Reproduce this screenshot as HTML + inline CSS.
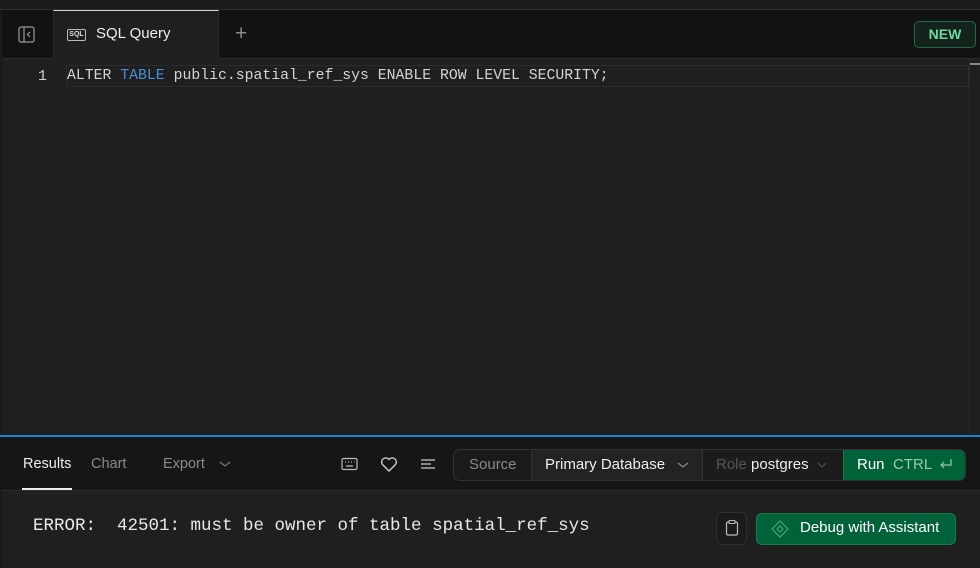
<!DOCTYPE html>
<html><head><style>
*{box-sizing:border-box;margin:0;padding:0}
body{width:980px;height:568px;overflow:hidden;background:#1f1f1f;font-family:"Liberation Sans",sans-serif;position:relative}
.abs{position:absolute}
.mono{font-family:"Liberation Mono","DejaVu Sans Mono",monospace}
</style></head><body>
<div class="abs" style="left:0;top:0;width:980px;height:10px;background:#1c1c1c;border-bottom:1px solid #2e2e2e"></div>
<div class="abs" style="left:0;top:10px;width:980px;height:49px;background:#121212;border-bottom:1px solid #2a2a2a"></div>
<div class="abs" style="left:0;top:10px;width:2px;height:558px;background:#1a1a1a"></div>
<svg class="abs" style="left:18px;top:26px" width="18" height="18" viewBox="0 0 18 18"><rect x="1" y="1" width="15" height="15" rx="2" fill="none" stroke="#9a9a9a" stroke-width="1.2"/><line x1="6" y1="1" x2="6" y2="16" stroke="#9a9a9a" stroke-width="1.2"/><path d="M12 6l-2.5 2.5L12 11" fill="none" stroke="#9a9a9a" stroke-width="1.2"/></svg>
<div class="abs" style="left:53px;top:10px;width:166px;height:49px;background:#1f1f1f;border-top:1px solid #cfcfcf;border-right:1px solid #2a2a2a;border-left:1px solid #2a2a2a"></div>
<div class="abs" style="left:67px;top:29px;width:19px;height:12px;border:1px solid #bbb;border-radius:2px;font-size:7px;color:#ddd;text-align:center;line-height:10px;font-weight:bold">SQL</div>
<div class="abs" style="left:96px;top:25px;font-size:15px;color:#eee">SQL Query</div>
<div class="abs" style="left:235px;top:22px;font-size:21px;color:#8a8a8a;font-weight:300">+</div>
<div class="abs" style="left:914px;top:21px;width:62px;height:27px;border:1px solid #1f6b45;background:#13231b;border-radius:5px;color:#6fd8a0;font-size:14px;font-weight:bold;text-align:center;line-height:25px">NEW</div>
<div class="abs" style="left:66px;top:65px;width:903px;height:22px;border:1px solid #2c2c2c"></div>
<div class="abs" style="left:969px;top:59px;width:1px;height:377px;background:#2a2a2a"></div>
<div class="abs" style="left:970px;top:63px;width:10px;height:2px;background:#888"></div>
<div class="abs mono" style="left:38px;top:68px;font-size:15px;color:#cfcfcf">1</div>
<div class="abs mono" style="left:67px;top:68px;font-size:14.8px;color:#d4d4d4;white-space:pre">ALTER <span style="color:#4a8fd6">TABLE</span> public.spatial_ref_sys ENABLE ROW LEVEL SECURITY;</div>
<div class="abs" style="left:0;top:435px;width:980px;height:2px;background:#1e7fd6"></div>
<div class="abs" style="left:0;top:437px;width:980px;height:54px;background:#161616;border-bottom:1px solid #2c2c2c"></div>
<div class="abs" style="left:23px;top:456px;font-size:14.5px;color:#eee">Results</div>
<div class="abs" style="left:22px;top:488px;width:50px;height:2px;background:#eee"></div>
<div class="abs" style="left:91px;top:456px;font-size:14.5px;color:#8a8a8a">Chart</div>
<div class="abs" style="left:163px;top:456px;font-size:14.5px;color:#8a8a8a">Export</div>
<svg class="abs" style="left:219px;top:460px" width="12" height="8"><path d="M1 2l5 4 5-4" fill="none" stroke="#777" stroke-width="1.2"/></svg>
<svg class="abs" style="left:341px;top:457px" width="18" height="14"><rect x="1" y="1.5" width="15" height="11" rx="1.5" fill="none" stroke="#bbb" stroke-width="1.2"/><path d="M4 5h1M7 5h1M10 5h1M13 5h0.5M5 9h7" stroke="#bbb" stroke-width="1.2"/></svg>
<svg class="abs" style="left:380px;top:456px" width="18" height="16"><path d="M9 15L2.5 8.5A3.8 3.8 0 0 1 9 3.5a3.8 3.8 0 0 1 6.5 5z" fill="none" stroke="#ccc" stroke-width="1.4"/></svg>
<svg class="abs" style="left:420px;top:458px" width="16" height="12"><path d="M1 2h14M1 6h10M1 10h14" stroke="#ccc" stroke-width="1.3"/></svg>
<div class="abs" style="left:453px;top:449px;width:513px;height:32px;border:1px solid #333;border-radius:7px;background:#1c1c1c;overflow:hidden">
 <div class="abs" style="left:0;top:0;width:78px;height:30px;background:#1a1a1a;border-right:1px solid #333"></div>
 <div class="abs" style="left:15px;top:6px;font-size:15px;color:#8a8a8a">Source</div>
 <div class="abs" style="left:78px;top:0;width:171px;height:30px;background:#232323;border-right:1px solid #333"></div>
 <div class="abs" style="left:91px;top:6px;font-size:15px;color:#eee">Primary Database</div>
 <svg class="abs" style="left:223px;top:11px" width="12" height="8"><path d="M1 2l5 4 5-4" fill="none" stroke="#888" stroke-width="1.2"/></svg>
 <div class="abs" style="left:262px;top:6px;font-size:15px;color:#555">Role <span style="color:#eee">postgres</span></div>
 <svg class="abs" style="left:363px;top:11px" width="10" height="8"><path d="M1 2l4 4 4-4" fill="none" stroke="#555" stroke-width="1"/></svg>
 <div class="abs" style="left:389px;top:-1px;width:124px;height:32px;background:#006239;border:1px solid #1a7a4c;border-radius:0 7px 7px 0"></div>
 <div class="abs" style="left:403px;top:6px;font-size:15px;color:#fff">Run</div>
 <div class="abs" style="left:439px;top:6px;font-size:15px;color:#9bc8b0">CTRL</div>
 <svg class="abs" style="left:485px;top:8px" width="14" height="14"><path d="M12 1v6H2M5 4L2 7l3 3" fill="none" stroke="#9bc8b0" stroke-width="1.2"/></svg>
</div>
<div class="abs mono" style="left:33px;top:516px;font-size:17.5px;color:#e8e8e8;white-space:pre">ERROR:  42501: must be owner of table spatial_ref_sys</div>
<div class="abs" style="left:716px;top:512px;width:31px;height:33px;border:1px solid #2f2f2f;border-radius:6px;background:#1b1b1b"></div>
<svg class="abs" style="left:724px;top:519px" width="16" height="18"><rect x="2.5" y="3" width="11" height="13" rx="1.5" fill="none" stroke="#bbb" stroke-width="1.2"/><rect x="5" y="1.5" width="6" height="3" rx="0.8" fill="#1b1b1b" stroke="#bbb" stroke-width="1.1"/></svg>
<div class="abs" style="left:756px;top:513px;width:200px;height:32px;background:#006239;border:1px solid #1a7a4c;border-radius:6px"></div>
<svg class="abs" style="left:770px;top:519px" width="20" height="20"><path d="M10 2l8 8-8 8-8-8z" fill="none" stroke="#3da873" stroke-width="1.2"/><path d="M10 7l3 3-3 3-3-3z" fill="none" stroke="#3da873" stroke-width="1.2"/></svg>
<div class="abs" style="left:800px;top:519px;font-size:15px;color:#fff">Debug with Assistant</div>
</body></html>
